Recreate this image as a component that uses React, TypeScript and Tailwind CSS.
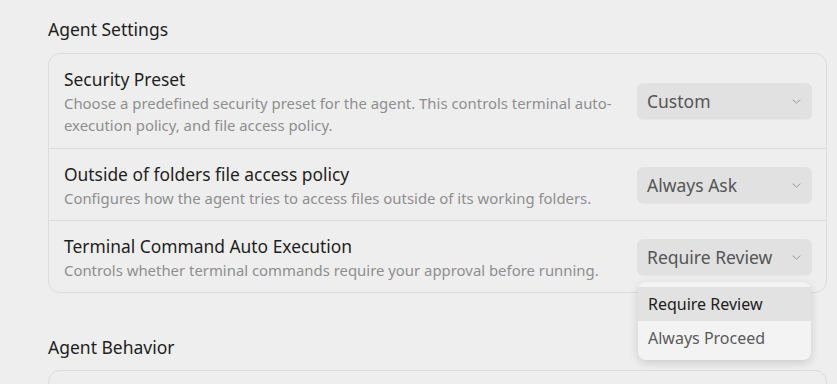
import React from "react";

type Row = { title: string; desc: string; value: string; open?: boolean };

const rows: Row[] = [
  {
    title: "Security Preset",
    desc: "Choose a predefined security preset for the agent. This controls terminal auto-execution policy, and file access policy.",
    value: "Custom",
  },
  {
    title: "Outside of folders file access policy",
    desc: "Configures how the agent tries to access files outside of its working folders.",
    value: "Always Ask",
  },
  {
    title: "Terminal Command Auto Execution",
    desc: "Controls whether terminal commands require your approval before running.",
    value: "Require Review",
    open: true,
  },
];

function Chevron() {
  return (
    <svg width="9" height="5" viewBox="0 0 9 5" fill="none" className="shrink-0">
      <path d="M1 1l3.5 3L8 1" stroke="#9a9a9a" strokeWidth="1" strokeLinecap="round" strokeLinejoin="round" />
    </svg>
  );
}

function Select({ value, open }: { value: string; open?: boolean }) {
  return (
    <div className="relative shrink-0">
      <div className="flex h-9 w-[175px] items-center justify-between rounded-md bg-[#e1e1e1] pl-[10px] pr-[11px] text-[17.5px] text-[#555555] shadow-[0_1px_1px_rgba(0,0,0,0.04)]">
        <span>{value}</span>
        <Chevron />
      </div>
      {open && (
        <div className="absolute left-px top-[43px] z-10 w-[173px] rounded-lg bg-[#f3f3f3] py-[5px] shadow-[0_3px_10px_rgba(0,0,0,0.14)]">
          <div className="flex h-[34px] items-center bg-[#e2e2e2] px-[10px] text-[16px] text-[#1c1c1c]">
            Require Review
          </div>
          <div className="flex h-[34px] items-center px-[10px] text-[16px] text-[#5a5a5a]">
            Always Proceed
          </div>
        </div>
      )}
    </div>
  );
}

export default function App() {
  return (
    <div
      className="h-[384px] w-[837px] overflow-hidden bg-[#eeeeee] pl-12 pr-[10px] pt-4"
      style={{ fontFamily: '"Noto Sans", "Open Sans", sans-serif' }}
    >
      <h2 className="text-[17.5px] leading-[26px] text-[#1e1e1e]">Agent Settings</h2>
      <div className="mt-[11px] rounded-xl border border-[#dcdcdc]">
        {rows.map((r, i) => (
          <div
            key={r.title}
            className={`flex items-center gap-6 pl-[15px] pr-[14px] pt-3 ${i > 0 ? "border-t border-[#dcdcdc] pb-[11px]" : "pb-3"}`}
          >
            <div className="min-w-0 flex-1">
              <div className="text-[17.4px] leading-[26px] text-[#1e1e1e]">{r.title}</div>
              <div className="text-[14.9px] leading-[22px] text-[#8e8e8e]">{r.desc}</div>
            </div>
            <Select value={r.value} open={r.open} />
          </div>
        ))}
      </div>
      <h2 className="mt-[41px] text-[17.5px] leading-[26px] text-[#1e1e1e]">Agent Behavior</h2>
      <div className="mt-[10px] h-16 rounded-xl border border-[#dcdcdc]" />
    </div>
  );
}
